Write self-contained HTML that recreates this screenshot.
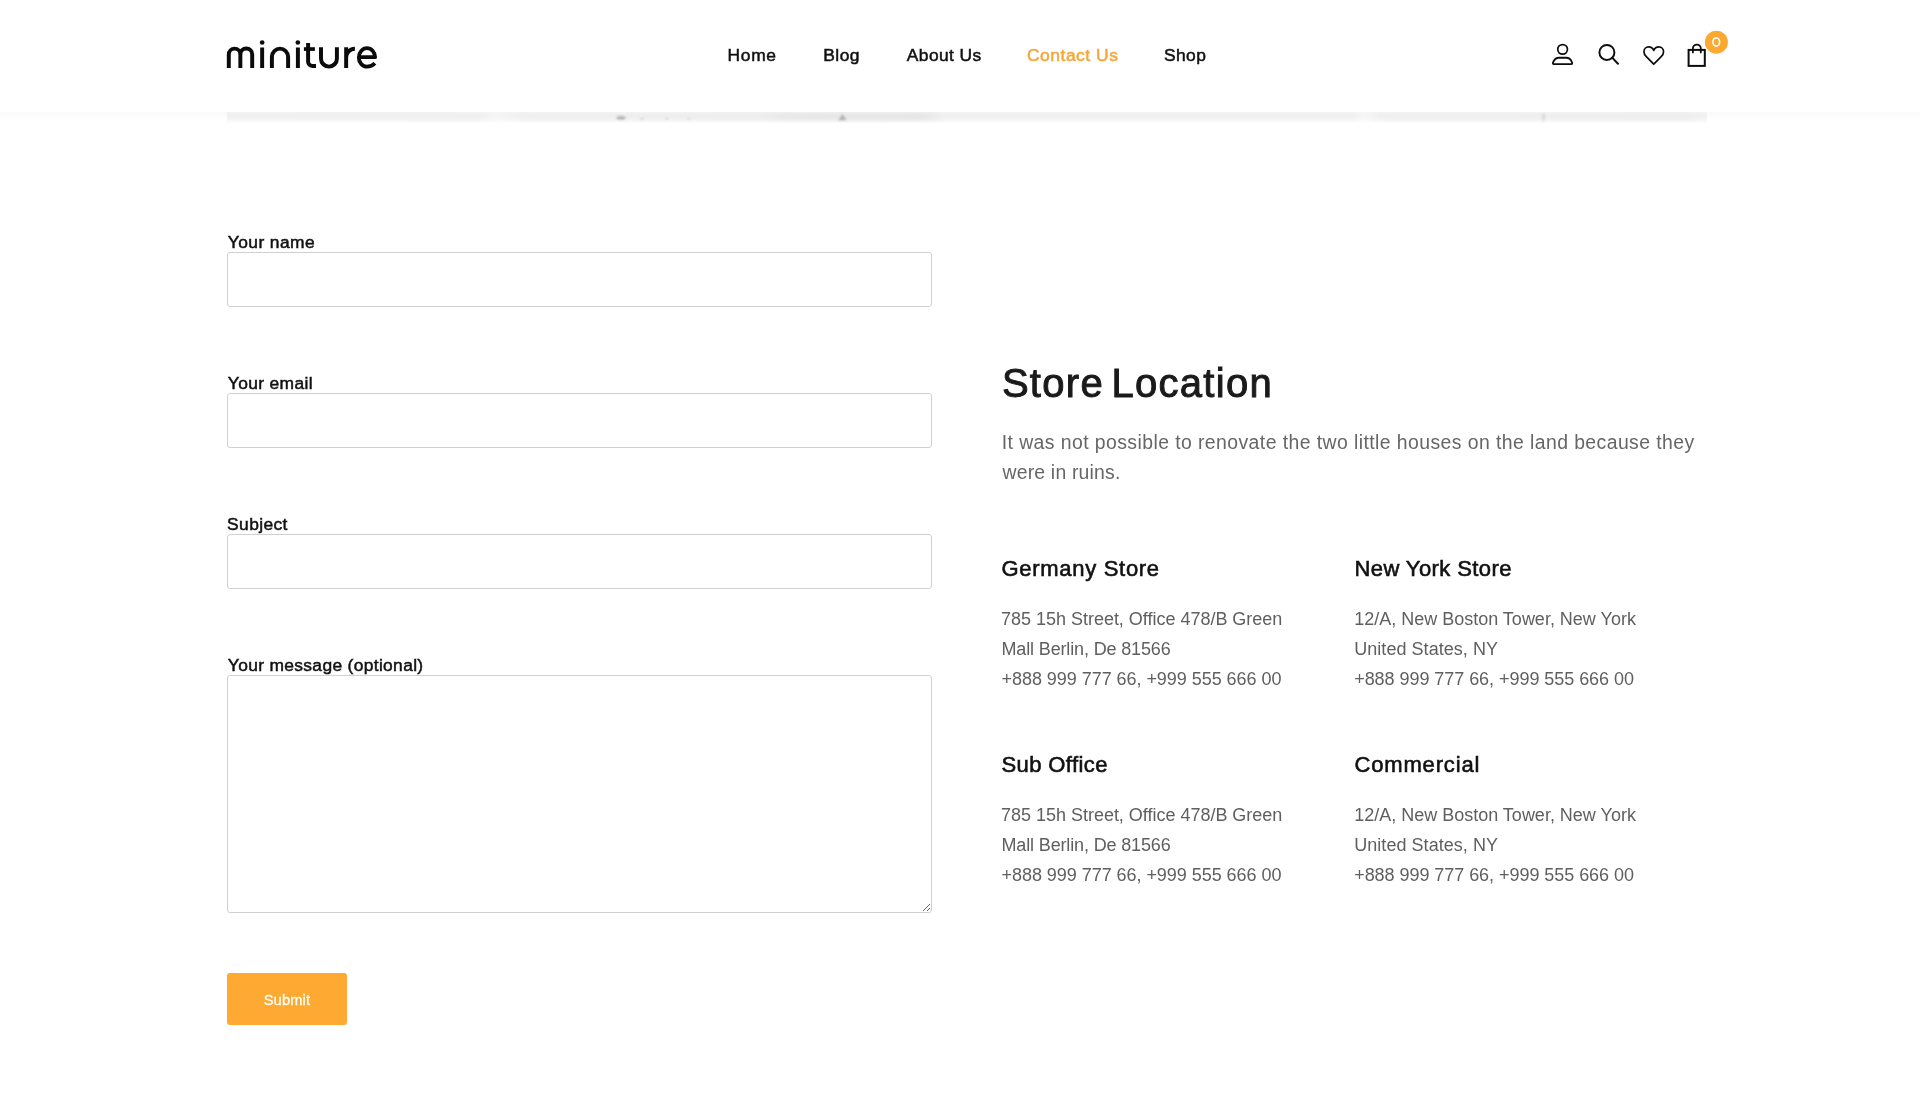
<!DOCTYPE html>
<html lang="en">
<head>
<meta charset="utf-8">
<title>Contact Us - Miniture</title>
<style>
*{box-sizing:border-box;margin:0;padding:0}
html,body{width:1920px;height:1110px;overflow:hidden;background:#fff}
body{font-family:"Liberation Sans",sans-serif;color:#1a1a1a;position:relative}
#page{position:absolute;left:0;top:0;width:1920px;height:1110px;will-change:transform}
.abs{position:absolute;white-space:nowrap}
#hdr{position:absolute;left:-30px;top:0;width:1980px;height:112px;background:#fff;box-shadow:0 2px 10px rgba(0,0,0,.035);z-index:5}
#hin{position:absolute;left:30px;top:0;width:1920px;height:112px}
#strip{position:absolute;left:227px;top:112px;width:1480px;height:11px;z-index:1;overflow:hidden}
.t{position:absolute;white-space:nowrap;font-weight:400;text-decoration:none;display:block}
.nav{font-size:17.4px;line-height:24px;color:#111;-webkit-text-stroke:.52px currentColor}
.nav.act{color:#f7a637}
.lbl{font-size:17.4px;line-height:22px;color:#111;-webkit-text-stroke:.5px currentColor}
.inp{position:absolute;left:227px;width:705px;height:55px;border:1px solid #d0d0d0;border-radius:3px;background:#fff;outline:none;padding:0 15px;font-family:"Liberation Sans",sans-serif;font-size:16px;display:block;margin:0}
textarea.inp{padding:10px 15px;overflow:auto}
#btn{-webkit-text-stroke:.3px #fff;border:0;font-family:"Liberation Sans",sans-serif;padding:0;position:absolute;left:227px;top:973px;width:120px;height:52px;border-radius:3px;background:#fea931;color:#fff;font-size:14.6px;letter-spacing:.2px;line-height:54px;text-align:center}
.h2{font-size:40px;line-height:52px;color:#1a1a1a;-webkit-text-stroke:.95px currentColor}
.p{font-size:19.4px;line-height:30px;color:#666}
.h4{font-size:22px;line-height:30px;color:#111;-webkit-text-stroke:.6px currentColor}
.ad{font-size:18px;line-height:30px;color:#5f5f5f}
</style>
</head>
<body>
<div id="page">
<header id="hdr"><div id="hin">
  <svg id="logo" class="abs" style="left:220px;top:30px" width="170" height="50" viewBox="220 30 170 50" fill="none" stroke="#0b0b0b" stroke-width="3.95" stroke-linecap="butt" stroke-linejoin="round">
    <path d="M228.8 67.9V54.4a5.775 5.775 0 0 1 11.55 0V67.9M240.35 54.4a5.925 5.925 0 0 1 11.85 0V67.9"/>
    <path d="M262.15 47.4V67.9M297.9 47.4V67.9"/>
    <circle cx="262.15" cy="42.5" r="2.35" fill="#0b0b0b" stroke="none"/>
    <circle cx="297.85" cy="42.5" r="2.35" fill="#0b0b0b" stroke="none"/>
    <path d="M271.9 67.9V56.75a8.1 8.1 0 0 1 16.2 0V67.9"/>
    <path d="M308.1 43V61.75a4.2 4.2 0 0 0 4.2 4.2H316"/>
    <path d="M303.9 49.05H314.9" stroke-width="3.7"/>
    <path d="M321 47.2V58.65a7.95 7.95 0 0 0 15.9 0V47.2"/>
    <path d="M346.15 47.2V67.9M346.15 57.6A8.8 8.8 0 0 1 354.9 48.8"/>
    <path d="M358.8 57.15H375.1A8.15 9.25 0 0 0 366.95 48.2A8.15 9.25 0 0 0 358.8 57.45A8.15 9.25 0 0 0 366.95 66.7Q371.8 66.7 374.9 63.3" stroke-width="3.8"/>
  </svg>
  <nav>
    <a id="n1" class="t nav" href="#" style="left:727.50px;top:43px;letter-spacing:0.702px">Home</a>
    <a id="n2" class="t nav" href="#" style="left:823.30px;top:43px;letter-spacing:0.447px">Blog</a>
    <a id="n3" class="t nav" href="#" style="left:906.80px;top:43px;letter-spacing:0.407px">About Us</a>
    <a id="n4" class="t nav act" href="#" style="left:1027.00px;top:43px;letter-spacing:0.537px">Contact Us</a>
    <a id="n5" class="t nav" href="#" style="left:1164.10px;top:43px;letter-spacing:0.369px">Shop</a>
  </nav>
  <svg id="icons" class="abs" style="left:1540px;top:25px" width="200" height="55" viewBox="1540 25 200 55" fill="none" stroke="#0d0d0d" stroke-width="1.8" stroke-linejoin="round" stroke-linecap="round">
    <circle cx="1562.6" cy="49.35" r="4.85" stroke-width="1.75"/>
    <path d="M1553.6 64.1C1552.6 64.1 1552.9 62.6 1553.4 61.6C1554.6 59.2 1556.6 57.75 1559 57.75H1566.2C1568.6 57.75 1570.6 59.2 1571.7 61.6C1572.2 62.6 1572.5 64.1 1571.5 64.1Z" stroke-width="1.85"/>
    <circle cx="1606.9" cy="52.45" r="7.5" stroke-width="1.95"/>
    <path d="M1612.4 57.9L1618 63.7" stroke-width="1.95"/>
    <path d="M1653.75 50.4C1652.9 48.4 1650.9 46.9 1648.6 46.9C1646 46.9 1643.95 49 1643.95 51.7C1643.95 53.6 1644.9 55.3 1646.3 56.7L1653.75 64.2L1661.2 56.7C1662.6 55.3 1663.55 53.6 1663.55 51.7C1663.55 49 1661.5 46.9 1658.9 46.9C1656.6 46.9 1654.6 48.4 1653.75 50.4Z" stroke-width="1.7" stroke-linejoin="round"/>
    <rect x="1688.6" y="49.9" width="16.2" height="16" stroke-width="2" stroke-linejoin="miter"/>
    <path d="M1692.9 52.4V48.55a3.95 3.95 0 0 1 7.9 0V52.4"/>
    <circle cx="1716.4" cy="42.15" r="11.5" fill="#fca831" stroke="none"/>
    <ellipse cx="1716.25" cy="42" rx="3.35" ry="4.05" stroke="#fff" stroke-width="1.65"/>
  </svg>
</div></header>
<svg id="strip" width="1480" height="11" viewBox="0 0 1480 11">
  <defs>
    <linearGradient id="sg" x1="0" x2="1" y1="0" y2="0">
      <stop offset="0" stop-color="#f3f3f3"/><stop offset=".17" stop-color="#f2f2f2"/><stop offset=".182" stop-color="#f8f8f8"/><stop offset=".2" stop-color="#f2f2f2"/>
      <stop offset=".36" stop-color="#f0f0f0"/><stop offset=".38" stop-color="#eaeaea"/><stop offset=".47" stop-color="#e9e9e9"/><stop offset=".485" stop-color="#f3f3f3"/>
      <stop offset=".76" stop-color="#f3f3f3"/><stop offset=".768" stop-color="#f9f9f9"/><stop offset=".78" stop-color="#f2f2f2"/><stop offset=".985" stop-color="#f0f0f0"/><stop offset="1" stop-color="#f4f4f4"/>
    </linearGradient>
    <linearGradient id="sv" x1="0" x2="0" y1="0" y2="1">
      <stop offset="0" stop-color="#fff" stop-opacity=".5"/><stop offset=".3" stop-color="#fff" stop-opacity="0"/><stop offset=".6" stop-color="#fff" stop-opacity=".05"/><stop offset=".85" stop-color="#fff" stop-opacity=".45"/><stop offset="1" stop-color="#fff" stop-opacity=".9"/>
    </linearGradient>
    <filter id="bl" x="-50%" y="-50%" width="200%" height="200%"><feGaussianBlur stdDeviation="1.1"/></filter>
  </defs>
  <rect width="1480" height="11" fill="url(#sg)"/>
  <g filter="url(#bl)">
    <ellipse cx="394" cy="6" rx="4.5" ry="2" fill="#b4b4b4"/>
    <ellipse cx="415" cy="7" rx="2" ry="1" fill="#cfcfcf"/>
    <ellipse cx="440" cy="7" rx="2" ry="1" fill="#d4d4d4"/>
    <ellipse cx="462" cy="7" rx="2" ry="1" fill="#d8d8d8"/>
    <path d="M611 9L615.5 2L620 9Z" fill="#b2b2b2"/>
    <rect x="1315" y="1" width="3" height="9" fill="#dcdcdc"/>
  </g>
  <rect width="1480" height="11" fill="url(#sv)"/>
</svg>
<main>
<form action="#" method="post">
<label id="l1" class="t lbl" for="fl1" style="left:227.80px;top:231px;letter-spacing:0.413px">Your name</label>
<input id="fl1" class="inp" type="text" style="top:252px">
<label id="l2" class="t lbl" for="fl2" style="left:227.80px;top:372px;letter-spacing:0.352px">Your email</label>
<input id="fl2" class="inp" type="email" style="top:393px">
<label id="l3" class="t lbl" for="fl3" style="left:227.10px;top:513px;letter-spacing:0.391px">Subject</label>
<input id="fl3" class="inp" type="text" style="top:534px">
<label id="l4" class="t lbl" for="fl4" style="left:227.80px;top:654px;letter-spacing:0.340px">Your message (optional)</label>
<textarea id="fl4" class="inp" style="top:675px;height:238px"></textarea>
<button id="btn" type="button">Submit</button>
</form>
<section id="stores">
<h2 id="h2" class="t h2" style="left:1001.90px;top:357px;letter-spacing:1.300px;word-spacing:-5px">Store Location</h2>
<p id="p1" class="t p" style="left:1001.75px;top:427px;letter-spacing:0.425px">It was not possible to renovate the two little houses on the land because they</p>
<p id="p2" class="t p" style="left:1002.45px;top:457px;letter-spacing:0.203px">were in ruins.</p>
<h4 id="g1" class="t h4" style="left:1001.50px;top:554px;letter-spacing:0.702px">Germany Store</h4>
<h4 id="g2" class="t h4" style="left:1354.50px;top:554px;letter-spacing:0.411px">New York Store</h4>
<h4 id="g3" class="t h4" style="left:1001.50px;top:750px;letter-spacing:0.397px">Sub Office</h4>
<h4 id="g4" class="t h4" style="left:1354.50px;top:750px;letter-spacing:0.834px">Commercial</h4>
<p id="a01" class="t ad" style="left:1001.00px;top:604px;letter-spacing:-0.016px">785 15h Street, Office 478/B Green</p>
<p id="a02" class="t ad" style="left:1001.50px;top:634px;letter-spacing:-0.143px">Mall Berlin, De 81566</p>
<p id="a03" class="t ad" style="left:1001.50px;top:664px;letter-spacing:-0.043px">+888 999 777 66, +999 555 666 00</p>
<p id="a11" class="t ad" style="left:1354.20px;top:604px;letter-spacing:-0.004px">12/A, New Boston Tower, New York</p>
<p id="a12" class="t ad" style="left:1354.20px;top:634px;letter-spacing:0.048px">United States, NY</p>
<p id="a13" class="t ad" style="left:1354.20px;top:664px;letter-spacing:-0.049px">+888 999 777 66, +999 555 666 00</p>
<p id="a21" class="t ad" style="left:1001.00px;top:800px;letter-spacing:-0.016px">785 15h Street, Office 478/B Green</p>
<p id="a22" class="t ad" style="left:1001.50px;top:830px;letter-spacing:-0.143px">Mall Berlin, De 81566</p>
<p id="a23" class="t ad" style="left:1001.50px;top:860px;letter-spacing:-0.043px">+888 999 777 66, +999 555 666 00</p>
<p id="a31" class="t ad" style="left:1354.20px;top:800px;letter-spacing:-0.004px">12/A, New Boston Tower, New York</p>
<p id="a32" class="t ad" style="left:1354.20px;top:830px;letter-spacing:0.048px">United States, NY</p>
<p id="a33" class="t ad" style="left:1354.20px;top:860px;letter-spacing:-0.049px">+888 999 777 66, +999 555 666 00</p>
</section>
</main>
</div>
</body>
</html>
